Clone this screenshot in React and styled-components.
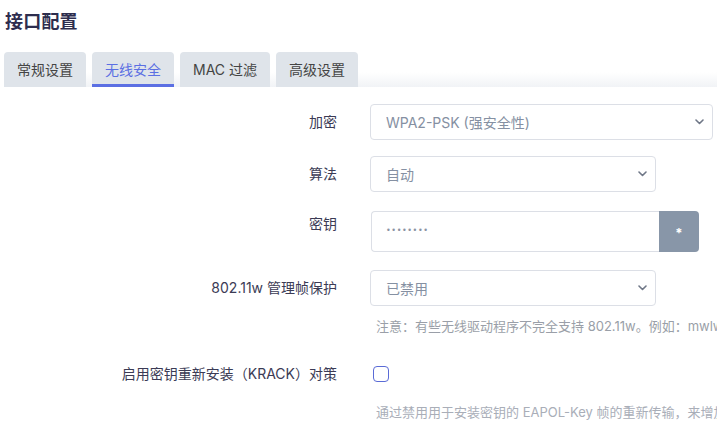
import React from 'react';
import styled, { createGlobalStyle } from 'styled-components';

const GlobalStyle = createGlobalStyle`
    html, body {
        margin: 0;
        padding: 0;
        background: #fff;
        overflow: hidden;
        font-family: Inter, "Noto Sans CJK SC", sans-serif;
    }
`;

const Page = styled.div`
    width: 717px;
    height: 423px;
    overflow: hidden;
    padding: 0 0 0 4px;
    box-sizing: border-box;
`;

const Title = styled.h2`
    margin: 0;
    padding: 7px 0 0 1px;
    height: 45px;
    box-sizing: border-box;
    font-size: 18px;
    font-weight: 700;
    color: #2d2d4e;
    letter-spacing: 0.2px;
`;

const TabBar = styled.div`
    display: flex;
    gap: 6px;
    padding-top: 7px;
    margin-right: -4px;
    background: linear-gradient(to bottom, #fff 0%, #fff 65%, #f1f3f6 100%);
`;

const Tab = styled.div`
    height: 35px;
    box-sizing: border-box;
    padding: 2px 13px 0;
    display: flex;
    align-items: center;
    background: #dfe4ea;
    border-radius: 4px 4px 0 0;
    font-size: 14px;
    color: ${p => p.$active ? '#5b6fe3' : '#444'};
    border-bottom: 3px solid ${p => p.$active ? '#5b6fe3' : 'transparent'};
`;

const Form = styled.div`
    padding-top: 17px;
`;

const Row = styled.div`
    display: flex;
    align-items: flex-start;
    margin-bottom: ${p => p.$mb ?? 16}px;
`;

const Label = styled.div`
    width: 333px;
    flex: none;
    text-align: right;
    font-size: 14px;
    color: #3b3b55;
    line-height: 20px;
    padding-top: ${p => p.$pt ?? 8}px;
    white-space: nowrap;
`;

const Field = styled.div`
    margin-left: ${p => p.$ml ?? 33}px;
    display: flex;
    flex-direction: column;
`;

const SelectWrap = styled.div`
    position: relative;
    width: ${p => p.$w}px;
`;

const Select = styled.select`
    appearance: none;
    width: 100%;
    height: 36px;
    box-sizing: border-box;
    border: 1px solid #dcdfe6;
    border-radius: 4px;
    background: #fff;
    padding: 0 30px 0 15px;
    font-family: inherit;
    font-size: 14px;
    color: #8590a2;
    outline: none;
`;

const Chevron = styled.svg`
    position: absolute;
    right: 9px;
    top: 15px;
    width: 9px;
    height: 6px;
    pointer-events: none;
`;

const InputGroup = styled.div`
    display: flex;
`;

const KeyInput = styled.input`
    width: 288px;
    height: 41px;
    box-sizing: border-box;
    border: 1px solid #dcdfe6;
    border-right: none;
    border-radius: 4px 0 0 4px;
    padding: 0 0 2px 14px;
    font-family: "DejaVu Sans", sans-serif;
    font-size: 8px;
    letter-spacing: 0.6px;
    color: #8a93a3;
    outline: none;
`;

const RevealButton = styled.button`
    width: 40px;
    height: 41px;
    border: none;
    border-radius: 0 4px 4px 0;
    background: #8896a8;
    color: #fff;
    font-family: inherit;
    font-size: 13px;
    font-weight: 700;
    padding: 3px 0 0;
`;

const Hint = styled.div`
    margin-top: ${p => p.$mt ?? 11}px;
    padding-left: 6px;
    font-size: 13px;
    color: ${p => p.$faded ? '#a9aeb8' : '#9a9fa8'};
    white-space: nowrap;
    line-height: 18px;
`;

const Checkbox = styled.span`
    display: block;
    width: 16px;
    height: 16px;
    box-sizing: border-box;
    border: 1.5px solid #5a6bd6;
    border-radius: 4px;
    background: #fff;
    margin-top: 2px;
`;

const ChevronIcon = () => (
    <Chevron viewBox="0 0 9 6">
        <path d="M1 1l3.5 3.5L8 1" fill="none" stroke="#6f7787" strokeWidth="1.6" strokeLinecap="round" strokeLinejoin="round" />
    </Chevron>
);

const SelectField = ({ width, value }) => (
    <SelectWrap $w={width}>
        <Select defaultValue={value}>
            <option>{value}</option>
        </Select>
        <ChevronIcon />
    </SelectWrap>
);

export default function App() {
    return (
        <>
            <GlobalStyle />
            <Page>
                <Title>接口配置</Title>
                <TabBar>
                    <Tab>常规设置</Tab>
                    <Tab $active>无线安全</Tab>
                    <Tab>MAC 过滤</Tab>
                    <Tab>高级设置</Tab>
                </TabBar>
                <Form>
                    <Row>
                        <Label>加密</Label>
                        <Field>
                            <SelectField width={343} value="WPA2-PSK (强安全性)" />
                        </Field>
                    </Row>
                    <Row $mb={19}>
                        <Label>算法</Label>
                        <Field>
                            <SelectField width={286} value="自动" />
                        </Field>
                    </Row>
                    <Row $mb={18}>
                        <Label $pt={3}>密钥</Label>
                        <Field $ml={34}>
                            <InputGroup>
                                <KeyInput readOnly value="••••••••" />
                                <RevealButton>*</RevealButton>
                            </InputGroup>
                        </Field>
                    </Row>
                    <Row $mb={29}>
                        <Label>802.11w 管理帧保护</Label>
                        <Field>
                            <SelectField width={286} value="已禁用" />
                            <Hint>注意：有些无线驱动程序不完全支持 802.11w。例如：mwlwifi 可能会有一些问题</Hint>
                        </Field>
                    </Row>
                    <Row $mb={0}>
                        <Label $pt={0}>启用密钥重新安装（KRACK）对策</Label>
                        <Field $ml={36}>
                            <Checkbox />
                        </Field>
                    </Row>
                    <Row>
                        <Label $pt={0} />
                        <Field>
                            <Hint $faded $mt={19}>通过禁用用于安装密钥的 EAPOL-Key 帧的重新传输，来增加客户端的安全性</Hint>
                        </Field>
                    </Row>
                </Form>
            </Page>
        </>
    );
}
